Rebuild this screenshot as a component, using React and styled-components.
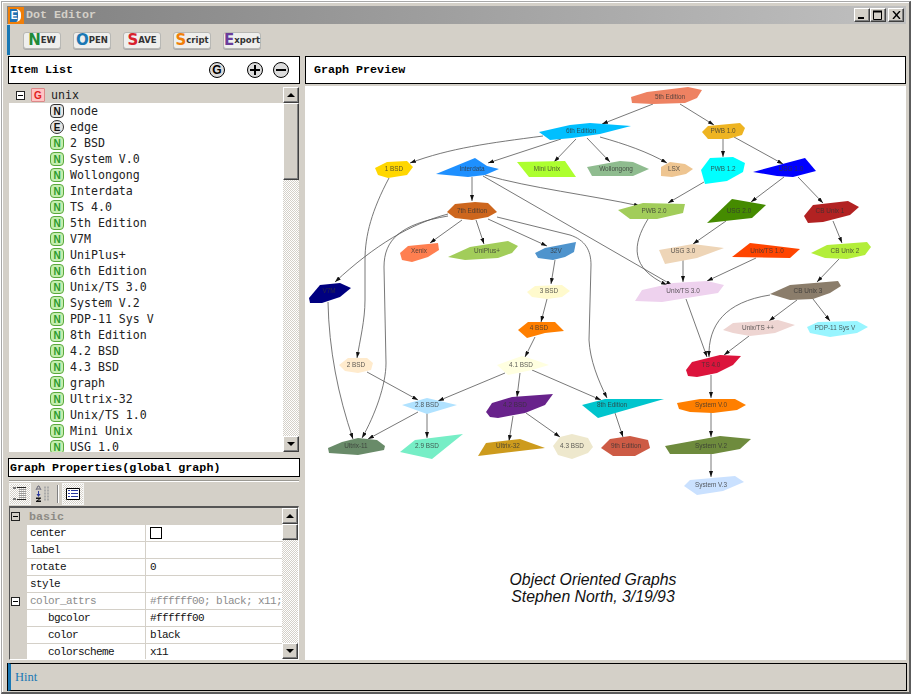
import React from "react";
import styled, { createGlobalStyle, css } from "styled-components";

const GlobalStyle = createGlobalStyle`
  html, body { margin: 0; padding: 0; background: #fff; overflow: hidden; }
  #root { width: 913px; height: 697px; }
`;

const MONO = `"Liberation Mono", monospace`;
const raised = css`
  border: 1px solid;
  border-color: #fff #404040 #404040 #fff;
  box-shadow: inset -1px -1px 0 #808080;
  background: #d4d0c8;
  box-sizing: border-box;
`;

const Window = styled.div`
  box-sizing: border-box;
  width: 910px;
  height: 693px;
  margin: 1px 0 0 1px;
  padding: 4px 3px 0 5px;
  background: #d4d0c8;
  border: 1px solid #a8a8a8;
  border-right: 2px solid #5c5c5c;
  border-bottom: 2px solid #5c5c5c;
  box-shadow: inset 1px 1px 0 #fff;
  display: flex;
  flex-direction: column;
`;

const TitleBar = styled.div`
  height: 18px;
  display: flex;
  align-items: center;
  background: linear-gradient(90deg, #808080, #c0c0c0);
  padding: 0 2px 0 1px;
  font: bold 11.7px ${MONO};
  color: #d4d0c8;
`;
const AppIcon = styled.span`
  width: 16px;
  height: 17px;
  box-sizing: border-box;
  background: #f07f09;
  border: 2px solid #f07f09;
  border-right-width: 3px;
  display: flex;
  margin-right: 2px;
  overflow: hidden;
  span {
    flex: 1;
    background: #1f6fb2;
    border-right: 3px solid #fff;
    border-radius: 0 5px 5px 0;
    color: #fff;
    font: bold 10px/13px "Liberation Sans", sans-serif;
    text-align: center;
  }
`;
const Title = styled.span`
  flex: 1;
`;
const CaptionButton = styled.button`
  ${raised}
  width: 16px;
  height: 14px;
  padding: 0;
  margin-left: ${(p) => p.$gap || 0}px;
  display: flex;
  align-items: center;
  justify-content: center;
`;

const ToolBar = styled.div`
  height: 30px;
  margin-top: 1px;
  display: flex;
  align-items: center;
  gap: 12px;
  padding-left: 13px;
  box-sizing: border-box;
  border-left: 3px solid #1a78b4;
`;
const ToolButton = styled.button`
  width: 38px;
  height: 17px;
  padding: 0;
  border: 1px solid #b8b8b4;
  border-radius: 3px;
  background: #efefed;
  box-shadow: 0 1px 0 #aaa;
  font: bold 8.5px "DejaVu Sans", sans-serif;
  color: #333;
  display: flex;
  align-items: center;
  justify-content: center;
  white-space: nowrap;
`;
const BigLetter = styled.span`
  font-size: 15px;
  line-height: 15px;
  color: ${(p) => p.$color};
`;

const Panes = styled.div`
  display: flex;
  gap: 5px;
  margin-top: 1px;
  height: 604px;
  flex: none;
`;
const LeftPane = styled.div`
  width: 293px;
  margin-left: 1px;
  display: flex;
  flex-direction: column;
`;
const RightPane = styled.div`
  width: 601px;
  display: flex;
  flex-direction: column;
`;
const Header = styled.div`
  box-sizing: border-box;
  height: ${(p) => p.$height}px;
  flex: none;
  border: 1px solid #000;
  background: #fff;
  display: flex;
  align-items: center;
  padding: 0 ${(p) => p.$right || 0}px 0 ${(p) => p.$pad || 1}px;
  font: bold 11.7px ${MONO};
  color: #000;
`;
const HeaderText = styled.span`
  flex: 1;
  margin-bottom: ${(p) => p.$lift || 0}px;
`;
const RoundIcon = styled.span`
  width: 16px;
  height: 16px;
  box-sizing: border-box;
  border-radius: 50%;
  border: 1px solid #000;
  background: #dcdcdc;
  margin-left: ${(p) => p.$gap || 0}px;
  display: flex;
  align-items: center;
  justify-content: center;
  font: bold 12px "Liberation Sans", sans-serif;
  svg { display: block; }
`;

const Tree = styled.div`
  margin: 3px 1px 0 1px;
  height: 365px;
  flex: none;
  display: flex;
  background: #fff;
  overflow: hidden;
`;
const TreeRows = styled.div`
  flex: 1;
  overflow: hidden;
`;
const TreeRow = styled.div`
  height: 16px;
  display: flex;
  align-items: center;
  padding-left: ${(p) => p.$indent}px;
  background: ${(p) => (p.$selected ? "#d4d0c8" : "#fff")};
  font: 11.6px "DejaVu Sans Mono", monospace;
  color: #222;
`;
const Expander = styled.span`
  width: 9px;
  height: 9px;
  box-sizing: border-box;
  border: 1px solid #222;
  background: ${(p) => p.$bg || "#fff"};
  position: relative;
  flex: none;
  &::after {
    content: "";
    position: absolute;
    left: 1px;
    right: 1px;
    top: 3px;
    height: 1px;
    background: #000;
  }
`;
const TYPE = {
  graph: { bg: "#ffc4c4", border: "#d88", text: "#e02020", radius: "1px" },
  plain: { bg: "#e6e6e6", border: "#333", text: "#111", radius: "4px" },
  round: { bg: "#e6e6e6", border: "#333", text: "#111", radius: "50%" },
  node: { bg: "#c4eeb0", border: "#5aa83c", text: "#2c9a2c", radius: "4px" },
};
const Badge = styled.span`
  width: 14px;
  height: 14px;
  box-sizing: border-box;
  flex: none;
  display: flex;
  align-items: center;
  justify-content: center;
  margin-right: 6px;
  margin-left: ${(p) => p.$left || 0}px;
  border: 1px solid ${(p) => TYPE[p.$type].border};
  background: ${(p) => TYPE[p.$type].bg};
  color: ${(p) => TYPE[p.$type].text};
  border-radius: ${(p) => TYPE[p.$type].radius};
  font: bold 10px "Liberation Sans", sans-serif;
`;

const ScrollBar = styled.div`
  width: 16px;
  flex: none;
  display: flex;
  flex-direction: column;
`;
const ScrollButton = styled.div`
  ${raised}
  height: 16px;
  flex: none;
  display: flex;
  align-items: center;
  justify-content: center;
  &::after {
    content: "";
    border-left: 4px solid transparent;
    border-right: 4px solid transparent;
    ${(p) => (p.$down ? "border-top: 4px solid #000;" : "border-bottom: 4px solid #000;")}
  }
`;
const ScrollThumb = styled.div`
  ${raised}
  height: ${(p) => p.$height}px;
  flex: none;
`;
const ScrollTrack = styled.div`
  flex: 1;
  background-color: #fff;
  background-image: repeating-conic-gradient(#d4d0c8 0 25%, #fff 0 50%);
  background-size: 2px 2px;
`;

const PropsHeader = styled(Header)`
  margin-top: 6px;
`;
const Rule = styled.div`
  height: 0;
  margin: 3px 1px 0 1px;
  border-top: 1px solid #9c9a94;
  border-bottom: 1px solid #fff;
`;
const PropsTools = styled.div`
  height: 22px;
  margin: 1px 0 0 1px;
  display: flex;
  align-items: center;
`;
const PropsTool = styled.span`
  width: 22px;
  height: 22px;
  box-sizing: border-box;
  display: flex;
  align-items: center;
  justify-content: center;
  margin-right: ${(p) => p.$gap || 0}px;
  ${(p) =>
    p.$pressed &&
    css`
      border: 1px solid #f4f4f2;
      background-image: repeating-conic-gradient(#d4d0c8 0 25%, #fff 0 50%);
      background-size: 2px 2px;
    `}
`;
const ToolDivider = styled.span`
  width: 2px;
  height: 18px;
  border-left: 1px solid #808080;
  border-right: 1px solid #fff;
  margin-right: 3px;
  box-sizing: border-box;
`;

const PropGrid = styled.div`
  flex: 1;
  min-height: 0;
  margin: 1px 1px 0 1px;
  display: flex;
  box-sizing: border-box;
  border: 1px solid;
  border-width: 2px 1px 1px 1px;
  border-color: #555 #fff #fff #555;
  background: #d4d0c8;
  overflow: hidden;
`;
const PropRows = styled.div`
  flex: 1;
  min-width: 0;
  overflow: hidden;
`;
const PropRow = styled.div`
  display: grid;
  grid-template-columns: 17px 119px 1fr;
  height: 17px;
  box-sizing: border-box;
  font: 11px ${MONO};
  letter-spacing: -0.6px;
  color: ${(p) => (p.$muted ? "#8c8c8c" : "#111")};
`;
const Gutter = styled.div`
  display: flex;
  align-items: center;
  padding-left: 1px;
  background: #d4d0c8;
`;
const PropName = styled.div`
  background: #fff;
  border-bottom: 1px solid #d4d0c8;
  border-right: 1px solid #d4d0c8;
  padding-left: ${(p) => (p.$nested ? 21 : 3)}px;
  line-height: 16px;
  white-space: nowrap;
`;
const PropValue = styled.div`
  background: #fff;
  border-bottom: 1px solid #d4d0c8;
  padding-left: 4px;
  line-height: 16px;
  white-space: nowrap;
  overflow: hidden;
  display: flex;
  align-items: center;
`;
const Section = styled.div`
  height: 17px;
  display: flex;
  align-items: center;
  padding-left: 1px;
  font: bold 11.7px ${MONO};
  color: #8c8a84;
`;
const SectionName = styled.span`
  margin-left: 9px;
`;
const CheckBox = styled.span`
  width: 12px;
  height: 12px;
  box-sizing: border-box;
  border: 1px solid #000;
  background: #fff;
`;

const Preview = styled.div`
  flex: 1;
  min-height: 0;
  margin-top: 2px;
  background: #fff;
  overflow: hidden;
  svg { display: block; }
`;
const GraphLayer = styled.g`
  filter: blur(0.3px);
`;
const NodeLabel = styled.text`
  font: 6.4px "Liberation Sans", sans-serif;
  fill: #333;
  fill-opacity: 0.8;
  text-anchor: middle;
`;
const Caption = styled.text`
  font: italic 15.8px "Liberation Sans", sans-serif;
  fill: #111;
  text-anchor: middle;
`;
const Edge = styled.path`
  fill: none;
  stroke: #555;
  stroke-width: 0.8;
`;

const HintBar = styled.div`
  box-sizing: border-box;
  height: 28px;
  flex: none;
  margin: 3px 0 0 1px;
  width: 899px;
  border: 1px solid #000;
  border-left: 3px solid #1a78b4;
  box-shadow: -1px 0 0 #000;
  padding-left: 4px;
  display: flex;
  align-items: center;
  font: 12.5px "Liberation Serif", serif;
  color: #1a78b4;
`;

const TREE_ITEMS = [
  ["N", "plain", "node"], ["E", "round", "edge"], ["N", "node", "2 BSD"], ["N", "node", "System V.0"],
  ["N", "node", "Wollongong"], ["N", "node", "Interdata"], ["N", "node", "TS 4.0"], ["N", "node", "5th Edition"],
  ["N", "node", "V7M"], ["N", "node", "UniPlus+"], ["N", "node", "6th Edition"], ["N", "node", "Unix/TS 3.0"],
  ["N", "node", "System V.2"], ["N", "node", "PDP-11 Sys V"], ["N", "node", "8th Edition"], ["N", "node", "4.2 BSD"],
  ["N", "node", "4.3 BSD"], ["N", "node", "graph"], ["N", "node", "Ultrix-32"], ["N", "node", "Unix/TS 1.0"],
  ["N", "node", "Mini Unix"], ["N", "node", "USG 1.0"],
];

// points are in page pixels, the svg viewBox starts at the preview's corner
const NODES = [
  ["5th Edition", 670, 97, "#ee8262", "631,97 647,92 688,87 702,90 697,98 685,103 653,104 632,103"],
  ["6th Edition", 581, 131, "#00bfff", "539,132 570,125 590,123 631,126 600,134 572,138 550,140"],
  ["1 BSD", 394, 169, "#ffd700", "375,168 387,162 407,161 413,167 407,175 388,178 378,175"],
  ["Interdata", 472, 169, "#1e90ff", "436,174 475,158 487,166 499,169 485,175 468,177"],
  ["Mini Unix", 547, 169, "#adff2f", "517,162 565,161 576,177 529,177"],
  ["Wollongong", 616, 169, "#8fbc8f", "587,167 620,161 633,162 649,169 633,176 592,176"],
  ["LSX", 674, 169, "#eec591", "661,167 670,162 685,164 693,169 686,174 672,177 661,176"],
  ["PWB 1.0", 723, 131, "#eeb422", "702,132 708,126 740,123 745,128 742,135 728,139 708,139"],
  ["PWB 1.2", 723, 169, "#00ffff", "701,170 710,158 733,157 745,163 743,172 727,181 705,184"],
  ["USG 1.0", 791, 169, "#0000ff", "753,172 805,158 816,171 793,177 777,176"],
  ["7th Edition", 472, 211, "#cd661d", "447,212 455,204 475,202 488,203 497,212 488,217 472,220 455,218"],
  ["PWB 2.0", 654, 211, "#a2cd5a", "618,210 643,203 685,204 683,213 657,219 630,219"],
  ["USG 2.0", 739, 211, "#458b00", "707,223 732,199 766,205 752,218"],
  ["CB Unix 1", 830, 211, "#b22222", "804,216 813,205 848,201 859,207 850,215 823,222 808,223"],
  ["Xenix", 419, 251, "#ff7f50", "400,253 408,246 438,243 439,250 428,257 412,262 402,260"],
  ["UniPlus+", 487, 251, "#a2cd5a", "448,257 470,247 508,241 518,246 512,253 498,258 465,260"],
  ["32V", 556, 251, "#4f94cd", "535,253 545,248 576,242 574,252 565,257 553,260 538,258"],
  ["USG 3.0", 683, 251, "#eed5b7", "659,250 693,244 724,248 697,258 665,264"],
  ["Unix/TS 1.0", 767, 251, "#ff4500", "732,257 750,243 800,249 790,258"],
  ["CB Unix 2", 845, 251, "#b3ee3a", "811,253 827,245 867,242 871,247 865,255 847,259 825,258"],
  ["V7M", 329, 291, "#000080", "309,298 320,285 340,283 351,288 340,297 322,303 310,303"],
  ["3 BSD", 549, 291, "#fffacd", "527,292 535,286 562,285 570,291 562,297 547,299 532,297"],
  ["Unix/TS 3.0", 683, 291, "#eed2ee", "635,301 642,290 673,283 707,281 724,285 718,293 693,297 662,302"],
  ["CB Unix 3", 808, 291, "#8b7d6b", "770,294 790,285 838,281 841,286 830,293 813,299 790,300"],
  ["4 BSD", 539, 328, "#ff7f00", "518,330 528,322 555,322 564,331 545,333 527,338"],
  ["Unix/TS ++", 758, 328, "#eed5d2", "723,330 733,323 778,320 795,325 775,333 750,336 733,333"],
  ["PDP-11 Sys V", 835, 328, "#98f5ff", "807,327 818,322 857,321 868,327 857,333 830,337 810,333"],
  ["2 BSD", 356, 365, "#ffebcd", "339,365 348,358 367,358 373,363 371,370 358,373 345,371"],
  ["4.1 BSD", 521, 365, "#ffffe0", "497,365 508,361 522,356 535,360 549,365 532,370 508,375"],
  ["TS 4.0", 711, 365, "#dc143c", "686,370 692,362 720,355 741,356 733,365 717,373 697,377 688,376"],
  ["2.8 BSD", 427, 405, "#b0e2ff", "402,405 427,398 457,405 427,414"],
  ["4.2 BSD", 515, 405, "#68228b", "486,412 492,403 512,397 553,394 545,405 525,413 498,418 490,417"],
  ["8th Edition", 612, 405, "#00c5cd", "582,405 605,399 664,399 598,418"],
  ["System V.0", 711, 405, "#ff7f00", "677,403 700,399 735,399 746,405 737,410 713,413 690,412 679,409"],
  ["Ultrix-11", 356, 446, "#698b69", "328,448 342,442 358,438 377,440 385,446 384,450 358,455 329,453"],
  ["2.9 BSD", 427, 446, "#76eec6", "400,452 415,440 463,434 432,459"],
  ["Ultrix-32", 508, 446, "#cd9b1d", "478,456 486,443 520,439 545,448"],
  ["4.3 BSD", 572, 446, "#eee8cd", "553,446 560,437 572,434 588,438 593,447 588,453 572,459 558,455"],
  ["9th Edition", 626, 446, "#cd5b45", "601,448 610,439 630,436 648,440 650,448 635,456 613,456"],
  ["System V.2", 711, 446, "#6e8b3d", "665,446 720,436 751,439 740,449 713,454 670,454"],
  ["System V.3", 711, 485, "#cae1ff", "684,486 690,480 735,476 744,482 723,491 697,495"],
];

const EDGES = [
  "M653,104 L602,124", "M680,104 L714,125", "M543,136 C490,143 450,148 410,163", "M561,139 L488,163",
  "M576,139 L554,162", "M587,138 L610,162", "M600,137 C625,144 648,152 667,163", "M723,139 L723,157",
  "M734,137 L783,164", "M704,182 L668,203", "M472,177 L472,201", "M485,175 C530,188 590,195 640,206",
  "M483,176 L672,285", "M784,177 L751,202", "M798,177 L823,203", "M833,221 L842,243", "M726,221 L693,244",
  "M683,259 L683,282", "M756,258 L707,281", "M648,219 C632,245 630,268 667,285", "M839,259 L817,282",
  "M797,300 L769,321", "M813,299 L830,321", "M770,295 C725,302 708,325 709,357", "M686,299 L707,357",
  "M749,336 L724,355", "M711,375 L711,398", "M711,412 L711,437", "M711,454 L711,477", "M615,413 L623,437",
  "M462,220 L430,243", "M476,220 L484,244", "M488,219 L547,246", "M555,260 L551,284", "M547,299 L541,322",
  "M535,337 L525,357", "M505,373 L438,401", "M520,373 L517,397", "M532,370 L601,400", "M513,416 L509,441",
  "M526,413 L560,437", "M418,412 L368,439", "M427,413 L427,438", "M367,372 L418,400",
  "M389,178 C372,210 365,235 365,260 L365,300 C365,320 360,340 357,358",
  "M328,302 C329,350 338,395 353,439",
  "M448,214 C410,224 375,245 335,282",
  "M448,216 C400,224 384,240 384,267 L386,363 C386,385 375,415 362,438",
  "M497,217 L570,235 C585,240 591,250 591,265 L589,340 C590,360 598,380 607,398",
];

const PlusIcon = () => (
  <svg width="10" height="10" viewBox="0 0 10 10"><path d="M0 5h10M5 0v10" stroke="#000" strokeWidth="2" /></svg>
);
const MinusIcon = () => (
  <svg width="10" height="10" viewBox="0 0 10 10"><path d="M0 5h10" stroke="#000" strokeWidth="2" /></svg>
);

const CategorizedIcon = () => (
  <svg width="16" height="16" viewBox="0 0 16 16">
    <path d="M1 1h3v2H1zM1 12h3v2H1z" fill="#777" />
    <path d="M5 1.5h9M5 13.5h9" stroke="#222" />
    <path d="M7 3.5h7M7 5.5h7M7 7.5h7M7 9.5h7M7 11.5h7" stroke="#9a9a9a" />
  </svg>
);
const SortedIcon = () => (
  <svg width="16" height="18" viewBox="0 0 16 18">
    <path d="M1 5l2-4h1l2 4M2 4h3" fill="none" stroke="#667" />
    <path d="M3.5 6v4" stroke="#2a3aa0" />
    <path d="M1.5 9h4l-2 3z" fill="#2a3aa0" />
    <path d="M1 12.5h5v1l-3 2h3v1.5H1v-1l3-2H1z" fill="#111" />
    <path d="M9 2.5h5M9 5.5h5M9 8.5h5M9 11.5h5M9 14.5h5" stroke="#aaa" strokeWidth="2" strokeDasharray="2 1" />
  </svg>
);
const PagesIcon = () => (
  <svg width="14" height="12" viewBox="0 0 14 12">
    <path d="M.5.5h13v11H.5z" fill="#fff" stroke="#000" />
    <path d="M2 2.5h2M5 2.5h7M2 5.5h2M5 5.5h7M2 8.5h2M5 8.5h7" stroke="#2a3aa0" />
  </svg>
);

const Scroller = ({ thumb }) => (
  <ScrollBar>
    <ScrollButton />
    <ScrollThumb $height={thumb} />
    <ScrollTrack />
    <ScrollButton $down />
  </ScrollBar>
);

const Graph = () => (
  <svg width="601" height="574" viewBox="305 86 601 574">
    <defs>
      <marker id="arrow" viewBox="0 0 6 4" refX="6" refY="2" markerWidth="6" markerHeight="4" markerUnits="userSpaceOnUse" orient="auto">
        <path d="M0 0L6 2L0 4z" fill="#111" />
      </marker>
    </defs>
    <GraphLayer>
      {EDGES.map((d) => (
        <Edge key={d} d={d} markerEnd="url(#arrow)" />
      ))}
      {NODES.map(([label, x, y, fill, points]) => (
        <g key={label}>
          <polygon points={points} fill={fill} />
          <NodeLabel x={x} y={y + 2}>{label}</NodeLabel>
        </g>
      ))}
    </GraphLayer>
    <Caption x="593" y="585">Object Oriented Graphs</Caption>
    <Caption x="593" y="602">Stephen North, 3/19/93</Caption>
  </svg>
);

const App = () => (
  <>
    <GlobalStyle />
    <Window>
      <TitleBar>
        <AppIcon><span>E</span></AppIcon>
        <Title>Dot Editor</Title>
        <CaptionButton>
          <svg width="8" height="8" viewBox="0 0 8 8"><path d="M0 7h6" stroke="#000" strokeWidth="2" /></svg>
        </CaptionButton>
        <CaptionButton>
          <svg width="10" height="10" viewBox="0 0 10 10"><path d="M.5 1.5h8v8h-8z" fill="none" stroke="#000" /><path d="M0 1.5h9" stroke="#000" strokeWidth="2" /></svg>
        </CaptionButton>
        <CaptionButton $gap={2}>
          <svg width="9" height="8" viewBox="0 0 9 8"><path d="M1 0l7 8M8 0l-7 8" stroke="#000" strokeWidth="1.4" /></svg>
        </CaptionButton>
      </TitleBar>

      <ToolBar>
        <ToolButton><BigLetter $color="#1f8a3a">N</BigLetter>EW</ToolButton>
        <ToolButton><BigLetter $color="#1a78b4">O</BigLetter>PEN</ToolButton>
        <ToolButton><BigLetter $color="#d8202c">S</BigLetter>AVE</ToolButton>
        <ToolButton><BigLetter $color="#f07f09">S</BigLetter>cript</ToolButton>
        <ToolButton><BigLetter $color="#6a3d9a">E</BigLetter>xport</ToolButton>
      </ToolBar>

      <Panes>
        <LeftPane>
          <Header $height={28} $right={10}>
            <HeaderText $lift={1}>Item List</HeaderText>
            <RoundIcon>G</RoundIcon>
            <RoundIcon $gap={22}><PlusIcon /></RoundIcon>
            <RoundIcon $gap={10}><MinusIcon /></RoundIcon>
          </Header>

          <Tree>
            <TreeRows>
              <TreeRow $indent={7} $selected>
                <Expander />
                <Badge $type="graph" $left={6}>G</Badge>
                unix
              </TreeRow>
              {TREE_ITEMS.map(([letter, type, name]) => (
                <TreeRow key={name} $indent={41}>
                  <Badge $type={type}>{letter}</Badge>
                  {name}
                </TreeRow>
              ))}
            </TreeRows>
            <Scroller thumb={77} />
          </Tree>

          <PropsHeader $height={19}>
            <HeaderText>Graph Properties(global graph)</HeaderText>
          </PropsHeader>
          <Rule />
          <PropsTools>
            <PropsTool $pressed $gap={1}><CategorizedIcon /></PropsTool>
            <PropsTool $gap={3}><SortedIcon /></PropsTool>
            <ToolDivider />
            <PropsTool $pressed><PagesIcon /></PropsTool>
          </PropsTools>

          <PropGrid>
            <PropRows>
              <Section><Expander $bg="#d4d0c8" /><SectionName>basic</SectionName></Section>
              <PropRow><Gutter /><PropName>center</PropName><PropValue><CheckBox /></PropValue></PropRow>
              <PropRow><Gutter /><PropName>label</PropName><PropValue /></PropRow>
              <PropRow><Gutter /><PropName>rotate</PropName><PropValue>0</PropValue></PropRow>
              <PropRow><Gutter /><PropName>style</PropName><PropValue /></PropRow>
              <PropRow $muted><Gutter><Expander /></Gutter><PropName>color_attrs</PropName><PropValue>#ffffff00; black; x11;</PropValue></PropRow>
              <PropRow><Gutter /><PropName $nested>bgcolor</PropName><PropValue>#ffffff00</PropValue></PropRow>
              <PropRow><Gutter /><PropName $nested>color</PropName><PropValue>black</PropValue></PropRow>
              <PropRow><Gutter /><PropName $nested>colorscheme</PropName><PropValue>x11</PropValue></PropRow>
            </PropRows>
            <Scroller thumb={16} />
          </PropGrid>
        </LeftPane>

        <RightPane>
          <Header $height={28} $pad={8}>
            <HeaderText $lift={1}>Graph Preview</HeaderText>
          </Header>
          <Preview><Graph /></Preview>
        </RightPane>
      </Panes>

      <HintBar>Hint</HintBar>
    </Window>
  </>
);

export default App;
